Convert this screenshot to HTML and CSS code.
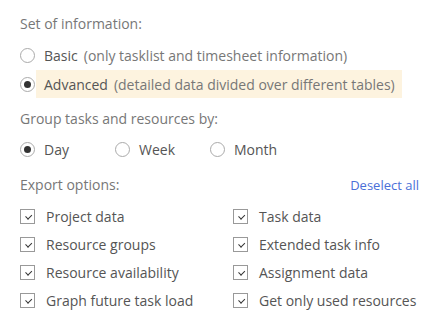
FILE: index.html
```html
<!DOCTYPE html>
<html lang="en">
<head>
    <meta charset="UTF-8">
    <title>Export settings</title>
    <link rel="stylesheet" href="styles.css">
</head>
<body>
    <div class="panel">
        <div class="section-title">Set of information:</div>
        <label class="option">
            <span class="radio"></span>
            <span class="label">Basic</span>
            <span class="hint">(only tasklist and timesheet information)</span>
        </label>
        <label class="option selected">
            <span class="radio checked"></span>
            <span class="highlight">
                <span class="label">Advanced</span>
                <span class="hint">(detailed data divided over different tables)</span>
            </span>
        </label>

        <div class="section-title group-title">Group tasks and resources by:</div>
        <div class="inline-options">
            <label class="option inline"><span class="radio checked"></span><span class="label">Day</span></label>
            <label class="option inline"><span class="radio"></span><span class="label">Week</span></label>
            <label class="option inline"><span class="radio"></span><span class="label">Month</span></label>
        </div>

        <div class="export-head">
            <div class="section-title">Export options:</div>
            <a class="deselect" href="#">Deselect all</a>
        </div>
        <div class="checks">
            <label class="check"><span class="box"></span>Project data</label>
            <label class="check"><span class="box"></span>Task data</label>
            <label class="check"><span class="box"></span>Resource groups</label>
            <label class="check"><span class="box"></span>Extended task info</label>
            <label class="check"><span class="box"></span>Resource availability</label>
            <label class="check"><span class="box"></span>Assignment data</label>
            <label class="check"><span class="box"></span>Graph future task load</label>
            <label class="check"><span class="box"></span>Get only used resources</label>
        </div>
    </div>
</body>
</html>
```

FILE: styles.css
```css
body {
    margin: 0;
    background: #fff;
    font-family: "Open Sans", Arial, sans-serif;
    font-size: 14px;
    color: #555;
}

.panel {
    padding: 14px 21px 0 20px;
}

.section-title {
    color: #777;
    line-height: 20px;
}

.option {
    display: flex;
    align-items: center;
    height: 28px;
    margin-top: 7px;
}

.option.selected {
    margin-top: 1px;
}

.radio {
    width: 15px;
    height: 15px;
    box-sizing: border-box;
    border: 1px solid #aaa;
    border-radius: 50%;
    margin-right: 9px;
    flex-shrink: 0;
    position: relative;
}

.radio.checked::after {
    content: "";
    position: absolute;
    left: 3px;
    top: 3px;
    width: 7px;
    height: 7px;
    border-radius: 50%;
    background: #333;
}

.label {
    color: #555;
    margin-right: 6px;
}

.hint {
    color: #777;
}

.highlight {
    display: flex;
    align-items: center;
    height: 28px;
    margin-left: -8px;
    padding: 0 7px 0 8px;
    background: #fdf3df;
}

.group-title {
    margin-top: 11px;
}

.inline-options {
    display: flex;
    margin-top: 6px;
}

.option.inline {
    width: 95px;
    margin-top: 0;
}

.export-head {
    display: flex;
    justify-content: space-between;
    align-items: center;
    margin-top: 12px;
}

.deselect {
    color: #4a6fd8;
    font-size: 13px;
    text-decoration: none;
}

.checks {
    display: grid;
    grid-template-columns: 213px 1fr;
    row-gap: 8px;
    margin-top: 11px;
}

.check {
    display: flex;
    align-items: center;
    height: 20px;
}

.box {
    width: 15px;
    height: 15px;
    box-sizing: border-box;
    border: 1px solid #999;
    margin-right: 11px;
    position: relative;
}

.box::after {
    content: "";
    position: absolute;
    left: 4px;
    top: 2px;
    width: 5px;
    height: 3px;
    border-left: 1.2px solid #333;
    border-bottom: 1.2px solid #333;
    transform: rotate(-45deg) translate(-1px, 2px);
}
```
